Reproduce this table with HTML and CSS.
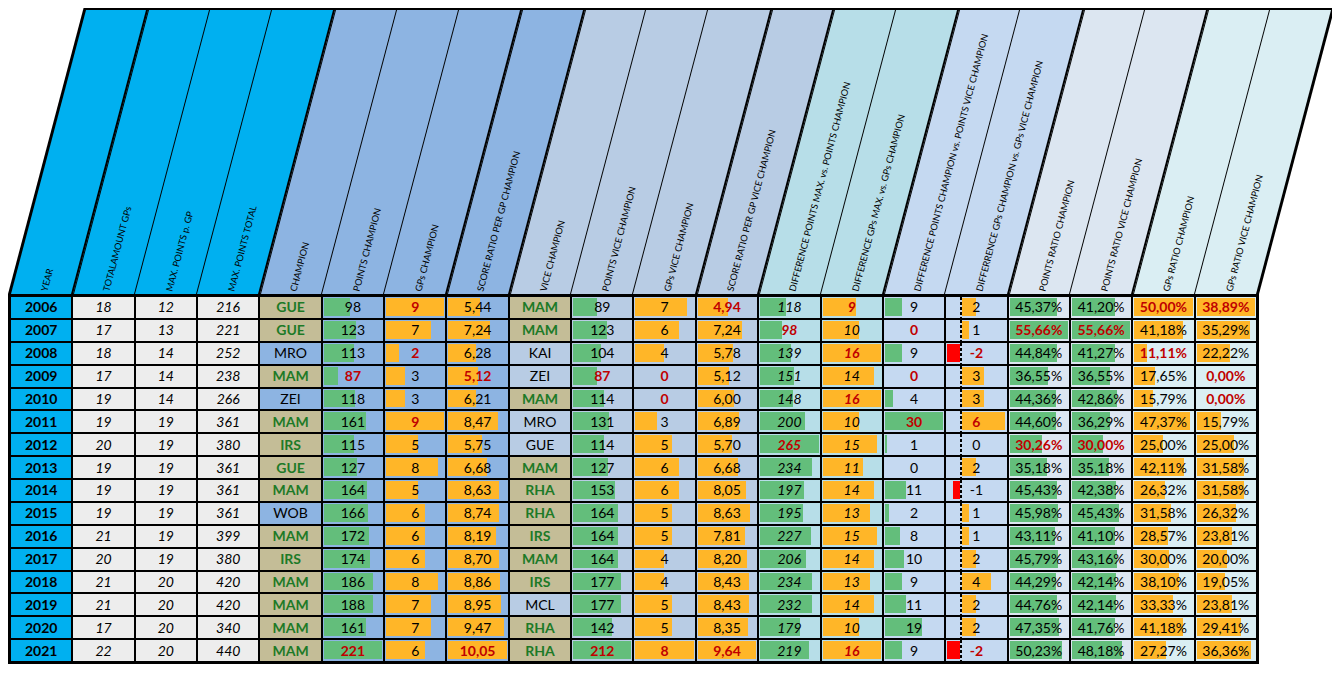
FILE: index.html
```html
<!DOCTYPE html>
<html lang="en">
<head>
<meta charset="utf-8">
<title>Championship statistics</title>
<link rel="stylesheet" href="styles.css">
</head>
<body>
<div class="sheet">
  <div class="head">
    <div class="h hc1"><span class="lbl">YEAR</span></div>
    <div class="h hc1 thick"><span class="lbl">TOTALAMOUNT GPs</span></div>
    <div class="h hc1 thin"><span class="lbl">MAX. POINTS p. GP</span></div>
    <div class="h hc1 thin"><span class="lbl">MAX. POINTS TOTAL</span></div>
    <div class="h hc2 thick"><span class="lbl">CHAMPION</span></div>
    <div class="h hc2 thin"><span class="lbl">POINTS CHAMPION</span></div>
    <div class="h hc2 thin"><span class="lbl">GPs CHAMPION</span></div>
    <div class="h hc2 thick"><span class="lbl">SCORE RATIO PER GP CHAMPION</span></div>
    <div class="h hc3 thick"><span class="lbl">VICE CHAMPION</span></div>
    <div class="h hc3 thin"><span class="lbl">POINTS VICE CHAMPION</span></div>
    <div class="h hc3 thin"><span class="lbl">GPs VICE CHAMPION</span></div>
    <div class="h hc3 thick"><span class="lbl">SCORE RATIO PER GP VICE CHAMPION</span></div>
    <div class="h hc4 thick"><span class="lbl">DIFFERENCE POINTS MAX. vs. POINTS CHAMPION</span></div>
    <div class="h hc4 thin"><span class="lbl">DIFFERENCE GPs MAX. vs. GPs CHAMPION</span></div>
    <div class="h hc5 thick"><span class="lbl">DIFFERENCE POINTS CHAMPION vs. POINTS VICE CHAMPION</span></div>
    <div class="h hc5 thin"><span class="lbl">DIFFERRENCE GPs CHAMPION vs. GPs VICE CHAMPION</span></div>
    <div class="h hc6 thick"><span class="lbl">POINTS RATIO CHAMPION</span></div>
    <div class="h hc6 thin"><span class="lbl">POINTS RATIO VICE CHAMPION</span></div>
    <div class="h hc7 thick"><span class="lbl">GPs RATIO CHAMPION</span></div>
    <div class="h hc7 thin"><span class="lbl">GPs RATIO VICE CHAMPION</span></div>
  </div>

  <div class="tbl">
    <div class="row">
      <div class="c y">2006</div><div class="c g">18</div><div class="c g">12</div><div class="c g">216</div>
      <div class="c t">GUE</div>
      <div class="c b1 gb" style="--w:44.3%">98</div>
      <div class="c b1 ob r" style="--w:100%">9</div>
      <div class="c b1 ob" style="--w:54.1%">5,44</div>
      <div class="c t">MAM</div>
      <div class="c b2 gb" style="--w:42%">89</div>
      <div class="c b2 ob" style="--w:87.5%">7</div>
      <div class="c b2 ob r" style="--w:51.2%">4,94</div>
      <div class="c b3 gb i" style="--w:44.5%">118</div>
      <div class="c b3 ob i r" style="--w:56.3%">9</div>
      <div class="c b4 gb" style="--w:30%">9</div>
      <div class="c b4 ax" style="--a:15px;--b:29.4px">2</div>
      <div class="c b5 gb" style="--w:81.5%">45,37%</div>
      <div class="c b5 gb" style="--w:74%">41,20%</div>
      <div class="c b6 ob r" style="--w:100%">50,00%</div>
      <div class="c b6 ob r" style="--w:100%">38,89%</div>
    </div>
    <div class="row">
      <div class="c y">2007</div><div class="c g">17</div><div class="c g">13</div><div class="c g">221</div>
      <div class="c t">GUE</div>
      <div class="c b1 gb" style="--w:55.7%">123</div>
      <div class="c b1 ob" style="--w:77.8%">7</div>
      <div class="c b1 ob" style="--w:72%">7,24</div>
      <div class="c t">MAM</div>
      <div class="c b2 gb" style="--w:58%">123</div>
      <div class="c b2 ob" style="--w:75%">6</div>
      <div class="c b2 ob" style="--w:75.1%">7,24</div>
      <div class="c b3 gb i r" style="--w:37%">98</div>
      <div class="c b3 ob i" style="--w:62.5%">10</div>
      <div class="c b4 gb r">0</div>
      <div class="c b4 ax" style="--a:15px;--b:22.2px">1</div>
      <div class="c b5 gb r" style="--w:100%">55,66%</div>
      <div class="c b5 gb r" style="--w:100%">55,66%</div>
      <div class="c b6 ob" style="--w:82.4%">41,18%</div>
      <div class="c b6 ob" style="--w:90.7%">35,29%</div>
    </div>
    <div class="row">
      <div class="c y">2008</div><div class="c g">18</div><div class="c g">14</div><div class="c g">252</div>
      <div class="c b1">MRO</div>
      <div class="c b1 gb" style="--w:51.1%">113</div>
      <div class="c b1 ob r" style="--w:22.2%">2</div>
      <div class="c b1 ob" style="--w:48%">6,28</div>
      <div class="c b2">KAI</div>
      <div class="c b2 gb" style="--w:49.1%">104</div>
      <div class="c b2 ob" style="--w:50%">4</div>
      <div class="c b2 ob" style="--w:60%">5,78</div>
      <div class="c b3 gb i" style="--w:52.5%">139</div>
      <div class="c b3 ob i r" style="--w:100%">16</div>
      <div class="c b4 gb" style="--w:30%">9</div>
      <div class="c b4 ax neg r" style="--a:0px;--b:13px">-2</div>
      <div class="c b5 gb" style="--w:80.6%">44,84%</div>
      <div class="c b5 gb" style="--w:74.1%">41,27%</div>
      <div class="c b6 ob r" style="--w:22.2%">11,11%</div>
      <div class="c b6 ob" style="--w:57.1%">22,22%</div>
    </div>
    <div class="row">
      <div class="c y">2009</div><div class="c g">17</div><div class="c g">14</div><div class="c g">238</div>
      <div class="c t">MAM</div>
      <div class="c b1 gb r" style="--w:24%">87</div>
      <div class="c b1 ob" style="--w:33.3%">3</div>
      <div class="c b1 ob r" style="--w:50.9%">5,12</div>
      <div class="c b2">ZEI</div>
      <div class="c b2 gb r" style="--w:41%">87</div>
      <div class="c b2 ob r">0</div>
      <div class="c b2 ob" style="--w:53.1%">5,12</div>
      <div class="c b3 gb i" style="--w:57%">151</div>
      <div class="c b3 ob i" style="--w:87.5%">14</div>
      <div class="c b4 gb r">0</div>
      <div class="c b4 ax" style="--a:15px;--b:36.6px">3</div>
      <div class="c b5 gb" style="--w:65.7%">36,55%</div>
      <div class="c b5 gb" style="--w:65.7%">36,55%</div>
      <div class="c b6 ob" style="--w:35.3%">17,65%</div>
      <div class="c b6 ob r">0,00%</div>
    </div>
    <div class="row">
      <div class="c y">2010</div><div class="c g">19</div><div class="c g">14</div><div class="c g">266</div>
      <div class="c b1">ZEI</div>
      <div class="c b1 gb" style="--w:53.4%">118</div>
      <div class="c b1 ob" style="--w:33.3%">3</div>
      <div class="c b1 ob" style="--w:48%">6,21</div>
      <div class="c t">MAM</div>
      <div class="c b2 gb" style="--w:53.8%">114</div>
      <div class="c b2 ob r">0</div>
      <div class="c b2 ob" style="--w:62.2%">6,00</div>
      <div class="c b3 gb i" style="--w:55.8%">148</div>
      <div class="c b3 ob i r" style="--w:100%">16</div>
      <div class="c b4 gb" style="--w:13.3%">4</div>
      <div class="c b4 ax" style="--a:15px;--b:36.6px">3</div>
      <div class="c b5 gb" style="--w:79.7%">44,36%</div>
      <div class="c b5 gb" style="--w:77%">42,86%</div>
      <div class="c b6 ob" style="--w:31.6%">15,79%</div>
      <div class="c b6 ob r">0,00%</div>
    </div>
    <div class="row">
      <div class="c y">2011</div><div class="c g">19</div><div class="c g">19</div><div class="c g">361</div>
      <div class="c t">MAM</div>
      <div class="c b1 gb" style="--w:72.9%">161</div>
      <div class="c b1 ob r" style="--w:100%">9</div>
      <div class="c b1 ob" style="--w:84.3%">8,47</div>
      <div class="c b2">MRO</div>
      <div class="c b2 gb" style="--w:61.8%">131</div>
      <div class="c b2 ob" style="--w:37.5%">3</div>
      <div class="c b2 ob" style="--w:71.5%">6,89</div>
      <div class="c b3 gb i" style="--w:75.5%">200</div>
      <div class="c b3 ob i" style="--w:62.5%">10</div>
      <div class="c b4 gb r" style="--w:100%">30</div>
      <div class="c b4 ax r" style="--a:15px;--b:58.2px">6</div>
      <div class="c b5 gb" style="--w:80.1%">44,60%</div>
      <div class="c b5 gb" style="--w:65.2%">36,29%</div>
      <div class="c b6 ob" style="--w:94.7%">47,37%</div>
      <div class="c b6 ob" style="--w:40.6%">15,79%</div>
    </div>
    <div class="row">
      <div class="c y">2012</div><div class="c g">20</div><div class="c g">19</div><div class="c g">380</div>
      <div class="c t">IRS</div>
      <div class="c b1 gb" style="--w:52%">115</div>
      <div class="c b1 ob" style="--w:55.6%">5</div>
      <div class="c b1 ob" style="--w:57.2%">5,75</div>
      <div class="c b2">GUE</div>
      <div class="c b2 gb" style="--w:53.8%">114</div>
      <div class="c b2 ob" style="--w:62.5%">5</div>
      <div class="c b2 ob" style="--w:59.1%">5,70</div>
      <div class="c b3 gb i r" style="--w:100%">265</div>
      <div class="c b3 ob i" style="--w:93.8%">15</div>
      <div class="c b4 gb" style="--w:3.3%">1</div>
      <div class="c b4 ax" style="--a:15px;--b:15px">0</div>
      <div class="c b5 gb r" style="--w:54.4%">30,26%</div>
      <div class="c b5 gb r" style="--w:53.9%">30,00%</div>
      <div class="c b6 ob" style="--w:50%">25,00%</div>
      <div class="c b6 ob" style="--w:64.3%">25,00%</div>
    </div>
    <div class="row">
      <div class="c y">2013</div><div class="c g">19</div><div class="c g">19</div><div class="c g">361</div>
      <div class="c t">GUE</div>
      <div class="c b1 gb" style="--w:57.5%">127</div>
      <div class="c b1 ob" style="--w:88.9%">8</div>
      <div class="c b1 ob" style="--w:66.5%">6,68</div>
      <div class="c t">MAM</div>
      <div class="c b2 gb" style="--w:59.9%">127</div>
      <div class="c b2 ob" style="--w:75%">6</div>
      <div class="c b2 ob" style="--w:69.3%">6,68</div>
      <div class="c b3 gb i" style="--w:88.3%">234</div>
      <div class="c b3 ob i" style="--w:68.8%">11</div>
      <div class="c b4 gb">0</div>
      <div class="c b4 ax" style="--a:15px;--b:29.4px">2</div>
      <div class="c b5 gb" style="--w:63.2%">35,18%</div>
      <div class="c b5 gb" style="--w:63.2%">35,18%</div>
      <div class="c b6 ob" style="--w:84.2%">42,11%</div>
      <div class="c b6 ob" style="--w:81.2%">31,58%</div>
    </div>
    <div class="row">
      <div class="c y">2014</div><div class="c g">19</div><div class="c g">19</div><div class="c g">361</div>
      <div class="c t">MAM</div>
      <div class="c b1 gb" style="--w:74.2%">164</div>
      <div class="c b1 ob" style="--w:55.6%">5</div>
      <div class="c b1 ob" style="--w:85.9%">8,63</div>
      <div class="c t">RHA</div>
      <div class="c b2 gb" style="--w:72.2%">153</div>
      <div class="c b2 ob" style="--w:75%">6</div>
      <div class="c b2 ob" style="--w:83.5%">8,05</div>
      <div class="c b3 gb i" style="--w:74.3%">197</div>
      <div class="c b3 ob i" style="--w:87.5%">14</div>
      <div class="c b4 gb" style="--w:36.7%">11</div>
      <div class="c b4 ax neg" style="--a:5.8px;--b:13px">-1</div>
      <div class="c b5 gb" style="--w:81.6%">45,43%</div>
      <div class="c b5 gb" style="--w:76.1%">42,38%</div>
      <div class="c b6 ob" style="--w:52.6%">26,32%</div>
      <div class="c b6 ob" style="--w:81.2%">31,58%</div>
    </div>
    <div class="row">
      <div class="c y">2015</div><div class="c g">19</div><div class="c g">19</div><div class="c g">361</div>
      <div class="c b1">WOB</div>
      <div class="c b1 gb" style="--w:75.1%">166</div>
      <div class="c b1 ob" style="--w:66.7%">6</div>
      <div class="c b1 ob" style="--w:87%">8,74</div>
      <div class="c t">RHA</div>
      <div class="c b2 gb" style="--w:77.4%">164</div>
      <div class="c b2 ob" style="--w:62.5%">5</div>
      <div class="c b2 ob" style="--w:89.5%">8,63</div>
      <div class="c b3 gb i" style="--w:73.6%">195</div>
      <div class="c b3 ob i" style="--w:81.3%">13</div>
      <div class="c b4 gb" style="--w:6.7%">2</div>
      <div class="c b4 ax" style="--a:15px;--b:22.2px">1</div>
      <div class="c b5 gb" style="--w:82.6%">45,98%</div>
      <div class="c b5 gb" style="--w:81.6%">45,43%</div>
      <div class="c b6 ob" style="--w:63.2%">31,58%</div>
      <div class="c b6 ob" style="--w:67.7%">26,32%</div>
    </div>
    <div class="row">
      <div class="c y">2016</div><div class="c g">21</div><div class="c g">19</div><div class="c g">399</div>
      <div class="c t">MAM</div>
      <div class="c b1 gb" style="--w:77.8%">172</div>
      <div class="c b1 ob" style="--w:66.7%">6</div>
      <div class="c b1 ob" style="--w:81.5%">8,19</div>
      <div class="c t">IRS</div>
      <div class="c b2 gb" style="--w:77.4%">164</div>
      <div class="c b2 ob" style="--w:62.5%">5</div>
      <div class="c b2 ob" style="--w:81%">7,81</div>
      <div class="c b3 gb i" style="--w:85.7%">227</div>
      <div class="c b3 ob i" style="--w:93.8%">15</div>
      <div class="c b4 gb" style="--w:26.7%">8</div>
      <div class="c b4 ax" style="--a:15px;--b:22.2px">1</div>
      <div class="c b5 gb" style="--w:77.5%">43,11%</div>
      <div class="c b5 gb" style="--w:73.8%">41,10%</div>
      <div class="c b6 ob" style="--w:57.1%">28,57%</div>
      <div class="c b6 ob" style="--w:61.2%">23,81%</div>
    </div>
    <div class="row">
      <div class="c y">2017</div><div class="c g">20</div><div class="c g">19</div><div class="c g">380</div>
      <div class="c t">IRS</div>
      <div class="c b1 gb" style="--w:78.7%">174</div>
      <div class="c b1 ob" style="--w:66.7%">6</div>
      <div class="c b1 ob" style="--w:86.6%">8,70</div>
      <div class="c t">MAM</div>
      <div class="c b2 gb" style="--w:77.4%">164</div>
      <div class="c b2 ob" style="--w:50%">4</div>
      <div class="c b2 ob" style="--w:85.1%">8,20</div>
      <div class="c b3 gb i" style="--w:77.7%">206</div>
      <div class="c b3 ob i" style="--w:87.5%">14</div>
      <div class="c b4 gb" style="--w:33.3%">10</div>
      <div class="c b4 ax" style="--a:15px;--b:29.4px">2</div>
      <div class="c b5 gb" style="--w:82.3%">45,79%</div>
      <div class="c b5 gb" style="--w:77.5%">43,16%</div>
      <div class="c b6 ob" style="--w:60%">30,00%</div>
      <div class="c b6 ob" style="--w:51.4%">20,00%</div>
    </div>
    <div class="row">
      <div class="c y">2018</div><div class="c g">21</div><div class="c g">20</div><div class="c g">420</div>
      <div class="c t">MAM</div>
      <div class="c b1 gb" style="--w:84.2%">186</div>
      <div class="c b1 ob" style="--w:88.9%">8</div>
      <div class="c b1 ob" style="--w:88.2%">8,86</div>
      <div class="c t">IRS</div>
      <div class="c b2 gb" style="--w:83.5%">177</div>
      <div class="c b2 ob" style="--w:50%">4</div>
      <div class="c b2 ob" style="--w:87.4%">8,43</div>
      <div class="c b3 gb i" style="--w:88.3%">234</div>
      <div class="c b3 ob i" style="--w:81.3%">13</div>
      <div class="c b4 gb" style="--w:30%">9</div>
      <div class="c b4 ax" style="--a:15px;--b:43.8px">4</div>
      <div class="c b5 gb" style="--w:79.6%">44,29%</div>
      <div class="c b5 gb" style="--w:75.7%">42,14%</div>
      <div class="c b6 ob" style="--w:76.2%">38,10%</div>
      <div class="c b6 ob" style="--w:49%">19,05%</div>
    </div>
    <div class="row">
      <div class="c y">2019</div><div class="c g">21</div><div class="c g">20</div><div class="c g">420</div>
      <div class="c t">MAM</div>
      <div class="c b1 gb" style="--w:85.1%">188</div>
      <div class="c b1 ob" style="--w:77.8%">7</div>
      <div class="c b1 ob" style="--w:89.1%">8,95</div>
      <div class="c b2">MCL</div>
      <div class="c b2 gb" style="--w:83.5%">177</div>
      <div class="c b2 ob" style="--w:62.5%">5</div>
      <div class="c b2 ob" style="--w:87.4%">8,43</div>
      <div class="c b3 gb i" style="--w:87.5%">232</div>
      <div class="c b3 ob i" style="--w:87.5%">14</div>
      <div class="c b4 gb" style="--w:36.7%">11</div>
      <div class="c b4 ax" style="--a:15px;--b:29.4px">2</div>
      <div class="c b5 gb" style="--w:80.4%">44,76%</div>
      <div class="c b5 gb" style="--w:75.7%">42,14%</div>
      <div class="c b6 ob" style="--w:66.7%">33,33%</div>
      <div class="c b6 ob" style="--w:61.2%">23,81%</div>
    </div>
    <div class="row">
      <div class="c y">2020</div><div class="c g">17</div><div class="c g">20</div><div class="c g">340</div>
      <div class="c t">MAM</div>
      <div class="c b1 gb" style="--w:72.9%">161</div>
      <div class="c b1 ob" style="--w:77.8%">7</div>
      <div class="c b1 ob" style="--w:94.2%">9,47</div>
      <div class="c t">RHA</div>
      <div class="c b2 gb" style="--w:67%">142</div>
      <div class="c b2 ob" style="--w:62.5%">5</div>
      <div class="c b2 ob" style="--w:86.6%">8,35</div>
      <div class="c b3 gb i" style="--w:67.5%">179</div>
      <div class="c b3 ob i" style="--w:62.5%">10</div>
      <div class="c b4 gb" style="--w:63.3%">19</div>
      <div class="c b4 ax" style="--a:15px;--b:29.4px">2</div>
      <div class="c b5 gb" style="--w:85.1%">47,35%</div>
      <div class="c b5 gb" style="--w:75%">41,76%</div>
      <div class="c b6 ob" style="--w:82.4%">41,18%</div>
      <div class="c b6 ob" style="--w:75.6%">29,41%</div>
    </div>
    <div class="row">
      <div class="c y">2021</div><div class="c g">22</div><div class="c g">20</div><div class="c g">440</div>
      <div class="c t">MAM</div>
      <div class="c b1 gb r" style="--w:100%">221</div>
      <div class="c b1 ob" style="--w:66.7%">6</div>
      <div class="c b1 ob r" style="--w:100%">10,05</div>
      <div class="c t">RHA</div>
      <div class="c b2 gb r" style="--w:100%">212</div>
      <div class="c b2 ob r" style="--w:100%">8</div>
      <div class="c b2 ob r" style="--w:100%">9,64</div>
      <div class="c b3 gb i" style="--w:82.6%">219</div>
      <div class="c b3 ob i r" style="--w:100%">16</div>
      <div class="c b4 gb" style="--w:30%">9</div>
      <div class="c b4 ax neg r" style="--a:0px;--b:13px">-2</div>
      <div class="c b5 gb" style="--w:90.2%">50,23%</div>
      <div class="c b5 gb" style="--w:86.6%">48,18%</div>
      <div class="c b6 ob" style="--w:54.5%">27,27%</div>
      <div class="c b6 ob" style="--w:93.5%">36,36%</div>
    </div>
  </div>
</div>
</body>
</html>
```
FILE: styles.css
```css
html, body {
  background: #ffffff;
}
body {
  margin: 8px;
  font-family: Lato, "Liberation Sans", sans-serif;
  color: #000;
}
.sheet {
  width: 1251px;
}

/* slanted header */
.head {
  box-sizing: border-box;
  height: 286px;
  padding: 2px 3px 0;
  background: #000;
  display: grid;
  grid-template-columns: repeat(20, minmax(0, 1fr));
  column-gap: 2px;
  transform: skewX(-14.8deg);
  transform-origin: 0 100%;
}
.h {
  min-width: 0;
  display: flex;
  align-items: flex-end;
  padding: 0 0 2px 37px;
}
.h.thin { margin-left: -1px; padding-left: 38px; }
.h.thick { border-left: 1px solid #000; padding-left: 36px; }
.hc1 { background: #00b0f0; }
.hc2 { background: #8db4e2; }
.hc3 { background: #b8cce4; }
.hc4 { background: #b7dee8; }
.hc5 { background: #c5d9f1; }
.hc6 { background: #dce6f1; }
.hc7 { background: #daeef3; }
.lbl {
  flex: none;
  white-space: nowrap;
  font-size: 9.2px;
  line-height: 1;
  transform-origin: 0 100%;
  transform: skewX(14.8deg) rotate(-75.2deg);
}

/* body grid */
.tbl {
  background: #000;
  padding: 3px;
  display: flex;
  flex-direction: column;
  gap: 2px;
}
.row {
  height: 20.875px;
  display: grid;
  grid-template-columns: repeat(20, minmax(0, 1fr));
  column-gap: 2px;
}
.c {
  min-width: 0;
  display: flex;
  align-items: center;
  justify-content: center;
  font-size: 14px;
  line-height: 1;
  white-space: nowrap;
}
.y { background: #00b0f0; font-weight: 700; }
.g { background: #ededed; font-style: italic; }
.t { background: #c4bd97; color: #1d7a27; font-weight: 700; }
.b1 { background-color: #8db4e2; }
.b2 { background-color: #b8cce4; }
.b3 { background-color: #b7dee8; }
.b4 { background-color: #c5d9f1; }
.b5 { background-color: #dce6f1; }
.b6 { background-color: #daeef3; }
.i { font-style: italic; }
.r { color: #c00000; font-weight: 700; }

/* data bars */
.gb, .ob {
  --w: 0%;
  background-image: linear-gradient(90deg, var(--bc) var(--w), transparent var(--w));
  background-size: calc(100% - 2px) calc(100% - 3px);
  background-position: 1px 1px;
  background-repeat: no-repeat;
}
.gb { --bc: #63be7b; }
.ob { --bc: #ffb628; }
.ax {
  --bc: #ffb628;
  --a: 15px;
  --b: 15px;
  background-image:
    repeating-linear-gradient(180deg, #000 0 3px, transparent 3px 5px),
    linear-gradient(90deg, transparent var(--a), var(--bc) var(--a), var(--bc) var(--b), transparent var(--b));
  background-size: 2px 100%, calc(100% - 2px) calc(100% - 3px);
  background-position: 14px 0, 1px 1px;
  background-repeat: no-repeat;
}
.ax.neg { --bc: #ff0000; }
```
